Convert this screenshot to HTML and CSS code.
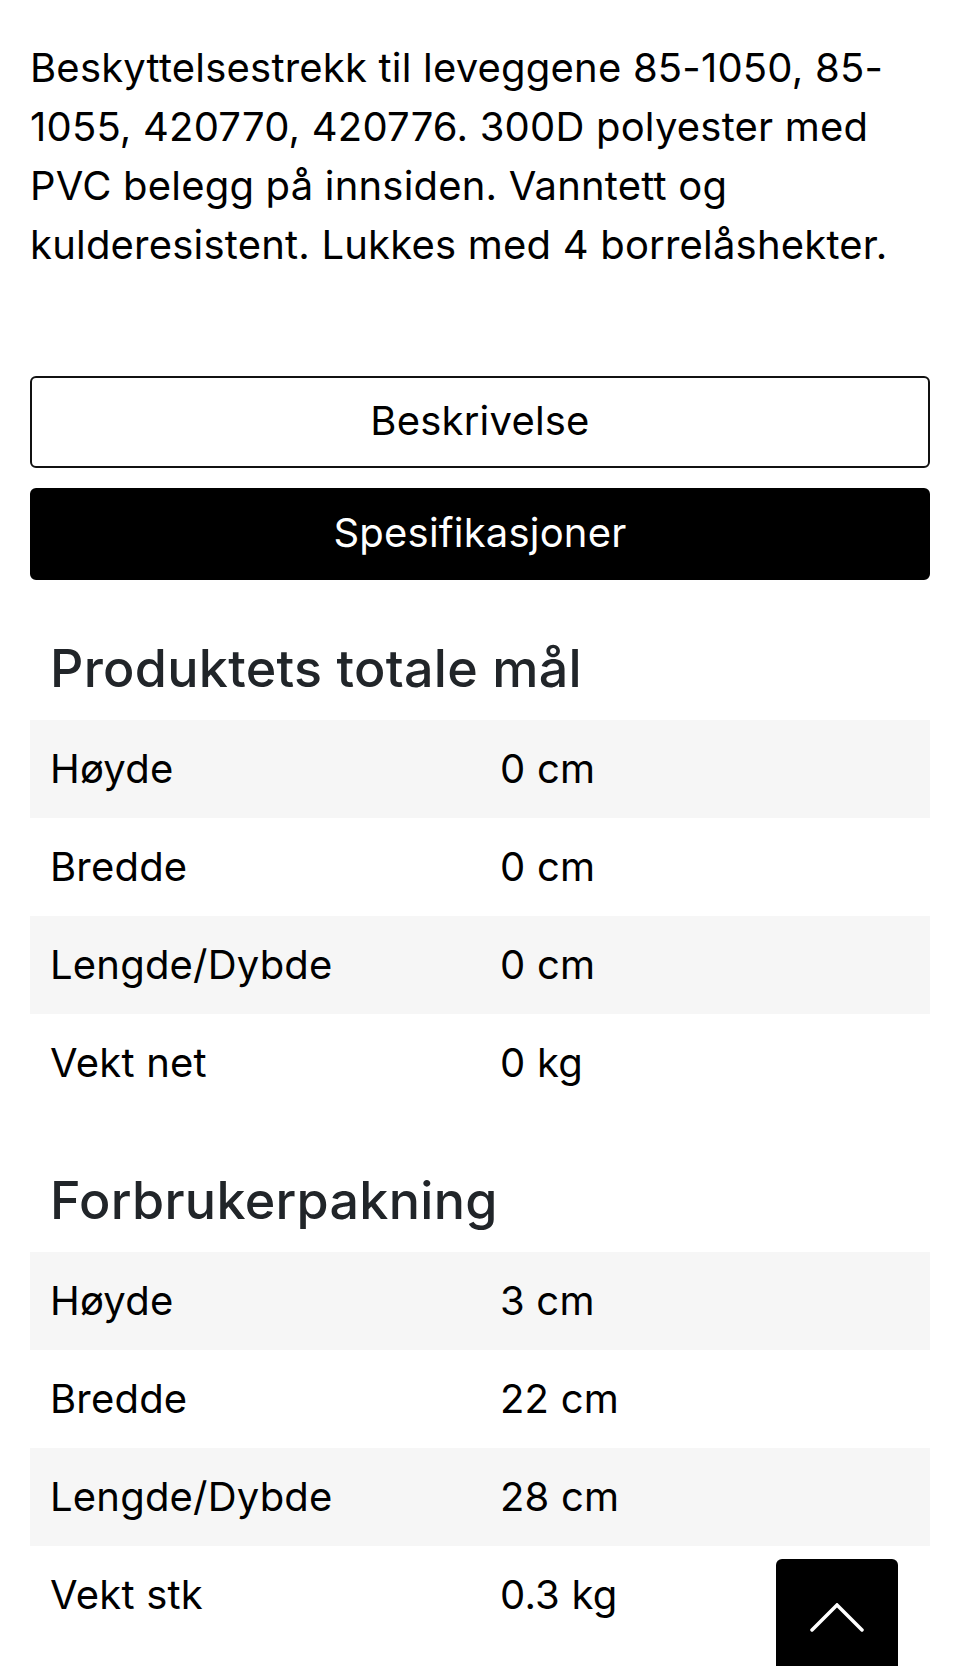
FILE: index.html
```html
<!DOCTYPE html>
<html lang="no">
<head>
<meta charset="utf-8">
<title>Beskyttelsestrekk</title>
<link rel="stylesheet" href="styles.css">
</head>
<body>
<main class="page">
  <p class="description">Beskyttelsestrekk til leveggene 85-1050, 85-1055, 420770, 420776. 300D polyester med PVC belegg på innsiden. Vanntett og kulderesistent. Lukkes med 4 borrelåshekter.</p>

  <div class="tabs">
    <button class="tab tab-outline" type="button">Beskrivelse</button>
    <button class="tab tab-active" type="button">Spesifikasjoner</button>
  </div>

  <section class="spec">
    <h3 class="spec-title">Produktets totale mål</h3>
    <table class="spec-table">
      <tbody>
        <tr><td>Høyde</td><td>0 cm</td></tr>
        <tr><td>Bredde</td><td>0 cm</td></tr>
        <tr><td>Lengde/Dybde</td><td>0 cm</td></tr>
        <tr><td>Vekt net</td><td>0 kg</td></tr>
      </tbody>
    </table>
  </section>

  <section class="spec">
    <h3 class="spec-title">Forbrukerpakning</h3>
    <table class="spec-table">
      <tbody>
        <tr><td>Høyde</td><td>3 cm</td></tr>
        <tr><td>Bredde</td><td>22 cm</td></tr>
        <tr><td>Lengde/Dybde</td><td>28 cm</td></tr>
        <tr><td>Vekt stk</td><td>0.3 kg</td></tr>
      </tbody>
    </table>
  </section>
</main>

<button class="to-top" type="button" aria-label="Til toppen">
  <svg class="to-top-icon" viewBox="0 0 54 29" width="54" height="29" aria-hidden="true">
    <path d="M2 27 L27 2 L52 27" fill="none" stroke="#fff" stroke-width="3.5" stroke-linecap="round" stroke-linejoin="miter"/>
  </svg>
</button>
</body>
</html>
```
FILE: styles.css
```css
html, body {
  margin: 0;
  padding: 0;
  background: #fff;
}

body {
  font-family: Inter, "Liberation Sans", sans-serif;
  color: #000;
}

.page {
  padding: 0 30px;
}

.description {
  margin: 38px 0 0;
  font-size: 40px;
  line-height: 59px;
  letter-spacing: 0.2px;
}

.tabs {
  margin-top: 102px;
  display: flex;
  flex-direction: column;
  gap: 20px;
}

.tab {
  display: block;
  width: 100%;
  height: 92px;
  border-radius: 6px;
  font-family: inherit;
  font-size: 40px;
  letter-spacing: 0.2px;
  line-height: 1;
  padding: 0 0 3px;
  cursor: pointer;
}

.tab-outline {
  background: #fff;
  color: #000;
  border: 2px solid #111;
}

.tab-active {
  background: #000;
  color: #fff;
  border: 2px solid #000;
}

.spec-title {
  margin: 58px 0 20px;
  padding-left: 20px;
  font-size: 52px;
  line-height: 62px;
  font-weight: 500;
  color: #212529;
  letter-spacing: 0.3px;
}

.spec-table {
  width: 100%;
  border-collapse: collapse;
  table-layout: fixed;
}

.spec-table td {
  width: 50%;
  padding: 19px 20px;
  font-size: 40px;
  line-height: 60px;
  letter-spacing: 0.2px;
  color: #000;
  vertical-align: middle;
}

.spec-table tr:nth-child(odd) td {
  background: #f6f6f6;
}

.to-top {
  position: fixed;
  right: 62px;
  bottom: -15px;
  width: 122px;
  height: 122px;
  border: 0;
  border-radius: 6px;
  background: #000;
  padding: 0;
  display: flex;
  justify-content: center;
  align-items: flex-start;
  cursor: pointer;
}

.to-top-icon {
  display: block;
  margin-top: 44px;
}
```
